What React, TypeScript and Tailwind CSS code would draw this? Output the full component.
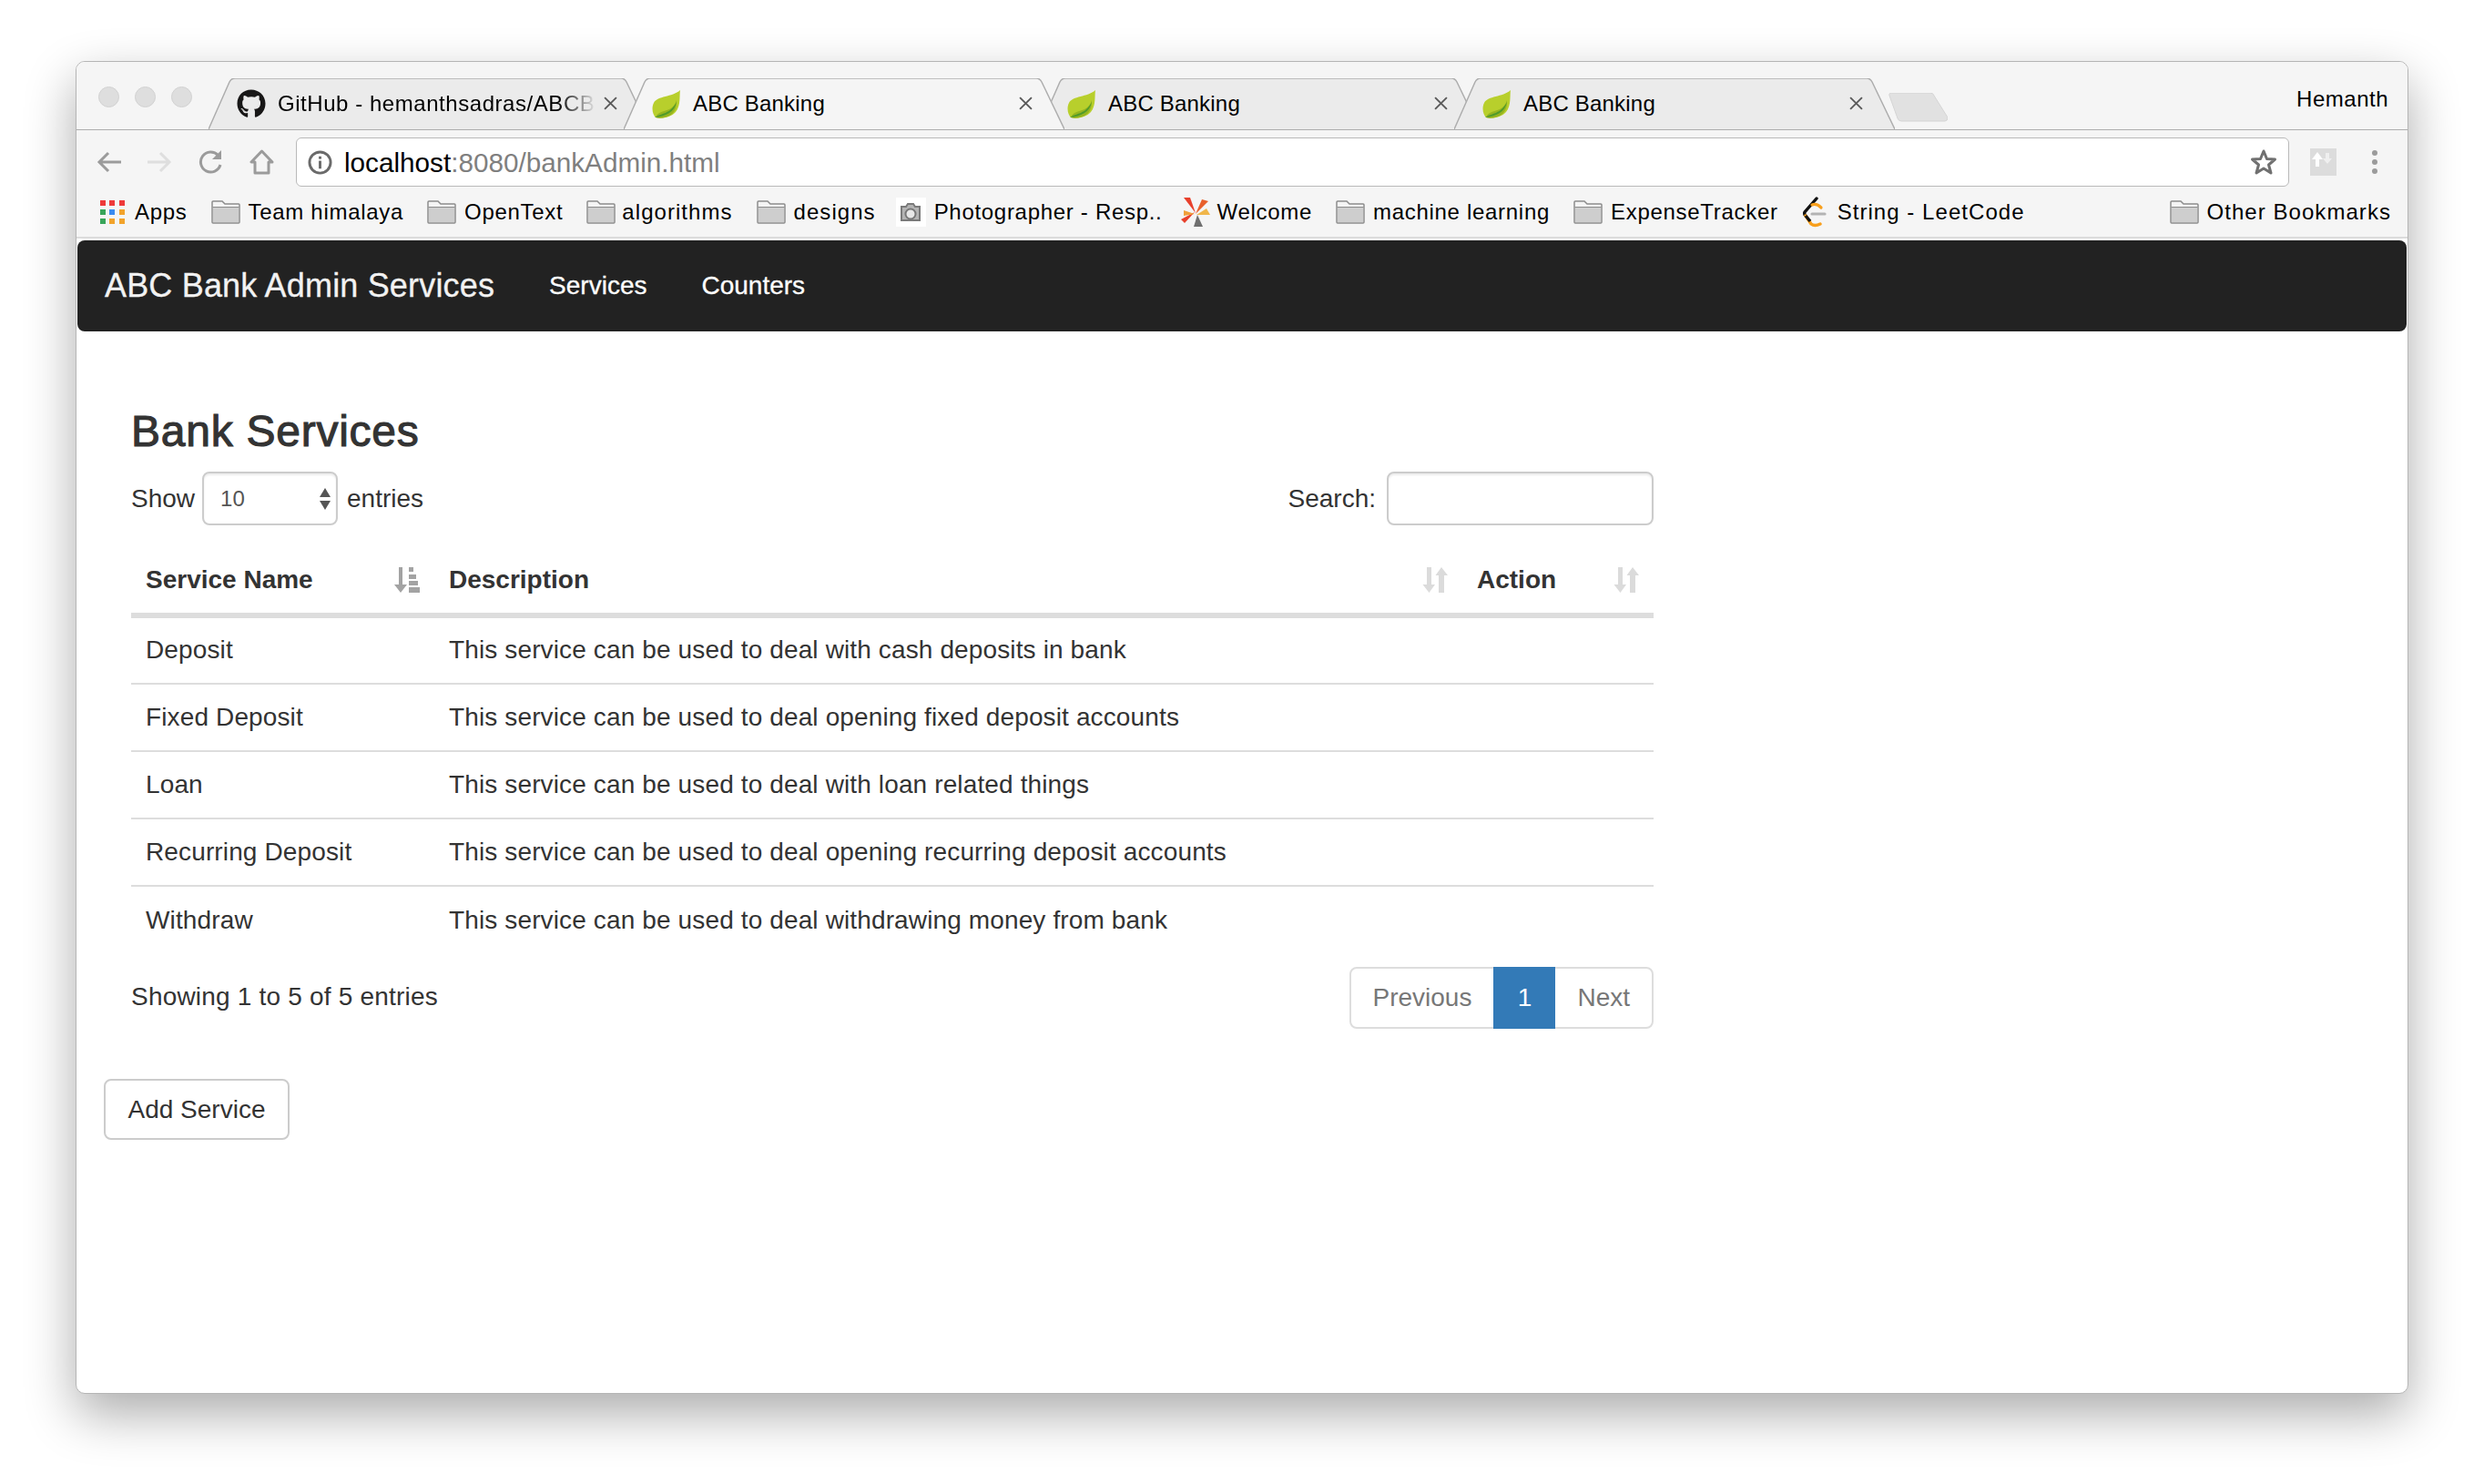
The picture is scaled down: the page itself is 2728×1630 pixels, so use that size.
import { FaGithub } from 'react-icons/fa';

const services = [
  ['Deposit', 'This service can be used to deal with cash deposits in bank'],
  ['Fixed Deposit', 'This service can be used to deal opening fixed deposit accounts'],
  ['Loan', 'This service can be used to deal with loan related things'],
  ['Recurring Deposit', 'This service can be used to deal opening recurring deposit accounts'],
  ['Withdraw', 'This service can be used to deal withdrawing money from bank'],
];

function Leaf() {
  return (
    <svg viewBox="0 0 32 32" className="w-8 h-8 shrink-0">
      <path d="M31 1C30 6 32 18 26 25C21 31 10 33 4 31C1 28-1 21 2 15C6 7 22 9 31 1Z" fill="#b8cf2c" />
      <path d="M4 31C6 25 14 24 19 22C23 20 26 16 27 12C28 20 24 28 17 30C12 32 7 32 4 31Z" fill="#96b520" />
      <path d="M3 31C10 26 20 28 27 14C25 25 15 30 3 31Z" fill="#4f9a2b" />
    </svg>
  );
}

function TabShape({ active }: { active: boolean }) {
  return (
    <svg viewBox="0 0 484 57" className="absolute inset-0 w-[484px] h-[57px]">
      <path
        d="M0 56 L23 4 Q25 0 29 0 L453 0 Q457 0 459 4 L484 56"
        fill={active ? '#f5f5f5' : '#ebebeb'}
        stroke="#adadad"
        strokeWidth="1.5"
      />
    </svg>
  );
}

function CloseX() {
  return (
    <svg viewBox="0 0 14 14" className="w-[15px] h-[15px] shrink-0">
      <path d="M1 1L13 13M13 1L1 13" stroke="#5a5a5a" strokeWidth="1.8" />
    </svg>
  );
}

function Tab({ title, active, github, first }: { title: string; active?: boolean; github?: boolean; first?: boolean }) {
  return (
    <div className={`relative w-[484px] h-[57px] shrink-0 ${first ? '' : '-ml-[28px]'} ${active ? 'z-10' : ''}`}>
      <TabShape active={!!active} />
      <div className="relative flex items-center h-[56px] pl-[31px] pr-[35px] pb-[1px]">
        {github ? <FaGithub className="w-8 h-8 text-[#181717] shrink-0" /> : <Leaf />}
        <span
          className={`ml-[13px] flex-1 whitespace-nowrap text-[24px] text-black ${
            github ? 'tracking-[0.55px] [mask-image:linear-gradient(to_right,black_88%,transparent)] mr-[8px]' : 'tracking-[0.2px]'
          }`}
        >
          {title}
        </span>
        <CloseX />
      </div>
    </div>
  );
}

function Folder() {
  return (
    <svg viewBox="0 0 32 26" className="w-8 h-[26px] shrink-0">
      <path d="M1 24V2Q1 1 2 1H12L15 4H30Q31 4 31 5V24Q31 25 30 25H2Q1 25 1 24Z" fill="#f4f4f4" stroke="#8c8c8c" strokeWidth="1.5" />
      <path d="M2 8H30V24H2Z" fill="#cecece" />
      <path d="M1.5 7.5H30.5" stroke="#8c8c8c" strokeWidth="1" />
    </svg>
  );
}

function AppsIcon() {
  const colors = ['#ee3a3a', '#ee3a3a', '#ee3a3a', '#38a55a', '#3b8cf0', '#f2a32b', '#38a55a', '#f2a32b', '#f2a32b'];
  return (
    <div className="grid grid-cols-3 gap-[4px] w-[27px] shrink-0">
      {colors.map((c, i) => (
        <div key={i} className="w-[6px] h-[6px]" style={{ background: c }} />
      ))}
    </div>
  );
}

function CameraIcon() {
  return (
    <div className="w-[33px] h-[32px] bg-white flex items-center justify-center shrink-0">
      <svg viewBox="0 0 24 24" className="w-[24px] h-[24px]">
        <path d="M2 6H7L9 3H15L17 6H22V21H2Z" fill="#b4b4b4" stroke="#7a7a7a" strokeWidth="2" />
        <circle cx="12" cy="14" r="5.500" fill="#e8e8e8" stroke="#777" strokeWidth="2" />
      </svg>
    </div>
  );
}

function BurstIcon() {
  return (
    <svg viewBox="0 0 32 34" className="w-8 h-[34px] shrink-0">
      <path d="M3 1L16 18L10 1Z" fill="#e8402c" />
      <path d="M30 5L16 19L23 3Z" fill="#e8602c" />
      <path d="M32 20L17 20L28 13Z" fill="#f0b64a" />
      <path d="M0 25L15 17L4 29Z" fill="#e8402c" />
      <path d="M3 15L15 19L3 21Z" fill="#f0a03a" />
      <path d="M14 33L18 20L24 33Z" fill="#6f6f6f" />
    </svg>
  );
}

function LeetIcon() {
  return (
    <svg viewBox="0 0 27 34" className="w-[27px] h-[34px] shrink-0">
      <path d="M16 2L3 17Q2 19 4 21" fill="none" stroke="#111" strokeWidth="3.4" strokeLinecap="round" />
      <path d="M4 21L10 30Q14 33 20 30" fill="none" stroke="#f89f1b" strokeWidth="3.4" strokeLinecap="round" />
      <path d="M4 21L9 27" fill="none" stroke="#111" strokeWidth="3.4" />
      <path d="M11 9Q16 7 21 12" fill="none" stroke="#f89f1b" strokeWidth="3.2" strokeLinecap="round" />
      <path d="M11 19H25" stroke="#b3b3b3" strokeWidth="3.2" strokeLinecap="round" />
    </svg>
  );
}

function Bookmark({ icon, label, gap = 9, wide }: { icon: React.ReactNode; label: string; gap?: number; wide?: boolean }) {
  return (
    <div className="flex items-center" style={{ gap }}>
      {icon}
      <span className={`text-[24px] text-black whitespace-nowrap ${wide ? 'tracking-[1.05px]' : 'tracking-[0.7px]'}`}>{label}</span>
    </div>
  );
}

function SortIcon({ sorted }: { sorted?: boolean }) {
  if (sorted) {
    return (
      <svg viewBox="0 0 28 28" className="w-[28px] h-[28px] shrink-0" fill="#a3a3a3">
        <path d="M5 0H9V19H14L7 28L0 19H5Z" />
        <rect x="16" y="0" width="5" height="5" />
        <rect x="16" y="8" width="8" height="5" />
        <rect x="16" y="15" width="10" height="5" />
        <rect x="16" y="22" width="12" height="6" />
      </svg>
    );
  }
  return (
    <svg viewBox="0 0 28 28" className="w-[28px] h-[28px] shrink-0" fill="#dbdbdb">
      <path d="M5 0H10V19H14L7.5 28L0.5 19H5Z" />
      <path d="M18 28H24V9H28L21 0L14.500 9H18Z" />
    </svg>
  );
}

export default function App() {
  return (
    <div className="w-[2728px] h-[1630px] bg-white pt-[67px] pl-[83px] overflow-hidden font-['Liberation_Sans',Arial,sans-serif]">
      <div className="w-[2562px] h-[1464px] rounded-[10px] bg-white border border-[#b5b5b5] shadow-[0_22px_55px_rgba(0,0,0,0.33)] overflow-hidden">
        {/* tab strip */}
        <div className="relative h-[75px] bg-[#f5f5f5] border-b-[1.5px] border-[#adadad] flex items-end pl-[145px]">
          <div className="absolute left-[24px] top-[27px] flex gap-[17px]">
            <div className="w-[23px] h-[23px] rounded-full bg-[#dedede] border border-[#d2d2d2]" />
            <div className="w-[23px] h-[23px] rounded-full bg-[#dedede] border border-[#d2d2d2]" />
            <div className="w-[23px] h-[23px] rounded-full bg-[#dedede] border border-[#d2d2d2]" />
          </div>
          <div className="flex -mb-[1px]">
            <Tab first github title="GitHub - hemanthsadras/ABCB" />
            <Tab active title="ABC Banking" />
            <Tab title="ABC Banking" />
            <Tab title="ABC Banking" />
          </div>
          <svg viewBox="0 0 65 32" className="w-[65px] h-[32px] mb-[8px] -ml-[7px] shrink-0">
            <path d="M1 3Q0 0 4 0H46Q49 0 50 3L65 27Q65 31 62 31H14Q11 31 10 28Z" fill="#e1e1e1" stroke="#d4d4d4" />
          </svg>
          <span className="absolute right-[21px] top-[23px] text-[24px] tracking-[0.5px] text-black">Hemanth</span>
        </div>

        {/* address bar */}
        <div className="h-[62px] bg-[#f5f5f5] flex items-center pt-[8px] pl-[22px] pr-[33px]">
          <svg viewBox="0 0 27 24" className="w-[27px] h-[24px] shrink-0" fill="none" stroke="#9b9b9b" strokeWidth="3">
            <path d="M27 12H3M13 2L3 12L13 22" />
          </svg>
          <svg viewBox="0 0 27 24" className="w-[27px] h-[24px] ml-[29px] shrink-0" fill="none" stroke="#dedede" strokeWidth="3">
            <path d="M0 12H24M14 2L24 12L14 22" />
          </svg>
          <svg viewBox="0 0 28 28" className="w-[28px] h-[28px] ml-[29px] shrink-0" fill="none" stroke="#9b9b9b" strokeWidth="3">
            <path d="M24 17A11 11 0 1 1 21.500 6.500" />
            <path d="M25 1V11H15Z" fill="#9b9b9b" stroke="none" />
          </svg>
          <svg viewBox="0 0 27 28" className="w-[27px] h-[28px] ml-[28px] shrink-0" fill="none" stroke="#9b9b9b" strokeWidth="3">
            <path d="M13.500 2L2 14H6V26H21V14H25Z" strokeLinejoin="round" />
          </svg>
          <div className="ml-[24px] flex-1 h-[54px] bg-white border-[1.5px] border-[#b9b9b9] rounded-[6px] flex items-center pl-[12px] pr-[12px]">
            <svg viewBox="0 0 28 28" className="w-[27px] h-[27px] shrink-0" fill="none">
              <circle cx="14" cy="14" r="12" stroke="#6a6a6a" strokeWidth="3" />
              <rect x="12.500" y="12" width="3" height="9" fill="#6a6a6a" />
              <rect x="12.500" y="7" width="3" height="3" fill="#6a6a6a" />
            </svg>
            <span className="ml-[13px] mt-[2px] text-[29.7px] text-black leading-none">
              localhost<span className="text-[#7f7f7f]">:8080/bankAdmin.html</span>
            </span>
            <svg viewBox="0 0 30 30" className="w-[30px] h-[30px] ml-auto shrink-0" fill="none" stroke="#707070" strokeWidth="3">
              <path d="M15 3L18.500 11.500L27.500 12L20.500 18L23 27L15 22L7 27L9.500 18L2.500 12L11.500 11.500Z" strokeLinejoin="round" />
            </svg>
          </div>
          <div className="ml-[23px] w-[29px] h-[30px] bg-[#dcdcdc] relative shrink-0">
            <svg viewBox="0 0 29 30" className="w-full h-full">
              <path d="M8 4L14 12H10V20H6V12H2Z" fill="#fff" />
              <path d="M17 5H21V11H24L19 17L14 11H17Z" fill="#efefef" />
            </svg>
          </div>
          <div className="ml-[39px] flex flex-col gap-[4px] shrink-0">
            <div className="w-[6px] h-[6px] rounded-full bg-[#9b9b9b]" />
            <div className="w-[6px] h-[6px] rounded-full bg-[#9b9b9b]" />
            <div className="w-[6px] h-[6px] rounded-full bg-[#9b9b9b]" />
          </div>
        </div>

        {/* bookmarks */}
        <div className="h-[57px] bg-[#f5f5f5] border-b-2 border-[#dcdcdc] flex items-center pl-[26px] pr-[18px]">
          <Bookmark icon={<AppsIcon />} label="Apps" gap={11} />
          <div className="flex items-center gap-[26px] ml-[26px]">
            <Bookmark icon={<Folder />} label="Team himalaya" />
            <Bookmark icon={<Folder />} label="OpenText" />
            <Bookmark icon={<Folder />} label="algorithms" gap={7} wide />
            <Bookmark icon={<Folder />} label="designs" wide />
            <div className="-ml-[4px]">
              <Bookmark icon={<CameraIcon />} label="Photographer - Resp.." gap={9} />
            </div>
            <div className="-ml-[6px]">
              <Bookmark icon={<BurstIcon />} label="Welcome" gap={8} />
            </div>
            <Bookmark icon={<Folder />} label="machine learning" />
            <Bookmark icon={<Folder />} label="ExpenseTracker" />
            <Bookmark icon={<LeetIcon />} label="String - LeetCode" gap={12} wide />
          </div>
          <div className="ml-auto">
            <Bookmark icon={<Folder />} label="Other Bookmarks" wide />
          </div>
        </div>

        {/* page */}
        <div className="px-[1px]">
          <nav className="h-[100px] bg-[#222222] rounded-[8px] flex items-center pl-[30px] mt-[2px]">
            <span className="text-[36px] tracking-[0.17px] text-[#f2f2f2] [-webkit-text-stroke:0.3px_#f2f2f2]">ABC Bank Admin Services</span>
            <span className="ml-[60px] text-[28px] text-white [-webkit-text-stroke:0.3px_#fff]">Services</span>
            <span className="ml-[60px] text-[28px] text-white [-webkit-text-stroke:0.3px_#fff]">Counters</span>
          </nav>

          <div className="pl-[29px] pt-[83px]">
            <div className="pl-[30px] w-[1702px] text-[28px] text-[#333]">
              <h3 className="text-[48px] leading-[53px] text-[#333] tracking-[0.75px] [-webkit-text-stroke:1.1px_#333]">Bank Services</h3>

              <div className="flex items-center justify-between mt-[18px] h-[59px]">
                <label className="flex items-center">
                  Show
                  <span className="relative ml-[8px] mr-[10px] w-[149px] h-[59px]">
                    <select className="w-full h-full pl-[18px] border-2 border-[#ccc] rounded-[8px] bg-white text-[24px] text-[#555] appearance-none outline-none shadow-[inset_0_2px_2px_rgba(0,0,0,0.075)]">
                      <option>10</option>
                    </select>
                    <svg viewBox="0 0 12 24" className="absolute right-[8px] top-[18px] w-[12px] h-[24px]" fill="#555">
                      <path d="M6 0L12 10H0Z" />
                      <path d="M0 14H12L6 24Z" />
                    </svg>
                  </span>
                  entries
                </label>
                <label className="flex items-center">
                  Search:
                  <input className="ml-[12px] w-[293px] h-[59px] border-2 border-[#ccc] rounded-[8px] bg-white outline-none shadow-[inset_0_2px_2px_rgba(0,0,0,0.075)]" />
                </label>
              </div>

              <table className="w-full table-fixed border-collapse mt-[25px]">
                <colgroup>
                  <col className="w-[333px]" />
                  <col />
                  <col className="w-[210px]" />
                </colgroup>
                <thead>
                  <tr className="h-[74px] border-b-[6px] border-[#dddddd]">
                    <th className="px-4 pb-[2px] text-left font-bold">
                      <div className="flex items-center justify-between">
                        Service Name
                        <SortIcon sorted />
                      </div>
                    </th>
                    <th className="px-4 pb-[2px] text-left font-bold">
                      <div className="flex items-center justify-between">
                        Description
                        <SortIcon />
                      </div>
                    </th>
                    <th className="px-4 pb-[2px] text-left font-bold">
                      <div className="flex items-center justify-between">
                        Action
                        <SortIcon />
                      </div>
                    </th>
                  </tr>
                </thead>
                <tbody>
                  {services.map(([name, desc], i) => (
                    <tr key={name} className={i === 0 ? 'h-[75px]' : 'h-[74px] border-t-2 border-[#dddddd]'}>
                      <td className={`px-4 tracking-[0.13px] ${i === 0 ? 'pb-[2px]' : ''}`}>{name}</td>
                      <td className={`px-4 tracking-[0.13px] ${i === 0 ? 'pb-[2px]' : ''}`} colSpan={2}>{desc}</td>
                    </tr>
                  ))}
                </tbody>
              </table>

              <div className="flex items-center justify-between mt-[15px]">
                <span className="pb-[2px] tracking-[0.2px]">Showing 1 to 5 of 5 entries</span>
                <div className="flex h-[68px] rounded-[8px] border-2 border-[#ddd] bg-white">
                  <span className="flex items-center pl-[23px] pr-[24px] text-[#777]">Previous</span>
                  <span className="flex items-center justify-center w-[68px] -my-[2px] bg-[#337ab7] text-white">1</span>
                  <span className="flex items-center pl-[24px] pr-[24px] text-[#777]">Next</span>
                </div>
              </div>
            </div>

            <button className="mt-[55px] w-[204px] h-[67px] border-2 border-[#ccc] rounded-[8px] bg-white text-[28px] text-[#333]">
              Add Service
            </button>
          </div>
        </div>
      </div>
    </div>
  );
}
